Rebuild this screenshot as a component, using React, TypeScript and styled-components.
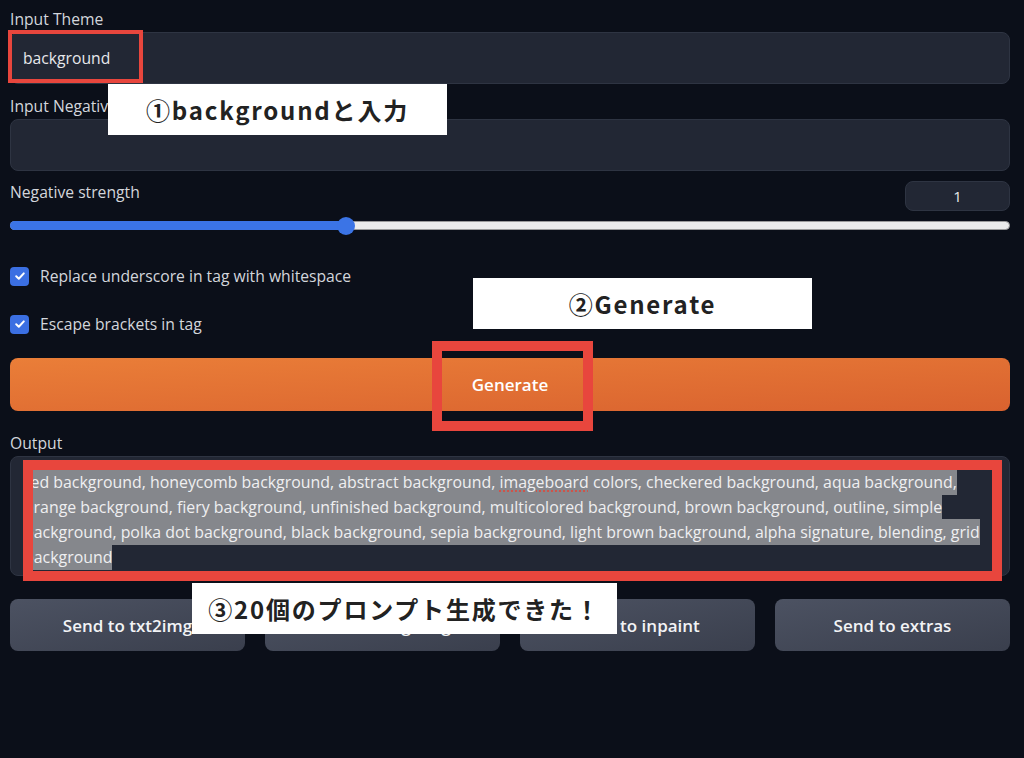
import styled, { createGlobalStyle } from 'styled-components';

const GlobalStyle = createGlobalStyle`
  body {
    margin: 0;
    background: #0b0f19;
    font-family: "Open Sans", "Noto Sans", sans-serif;
  }
`;

const outputLines = [
  'red background, honeycomb background, abstract background, imageboard colors, checkered background, aqua background,',
  'orange background, fiery background, unfinished background, multicolored background, brown background, outline, simple',
  'background, polka dot background, black background, sepia background, light brown background, alpha signature, blending, grid',
  'background',
];

const sendButtons = ['Send to txt2img', 'Send to img2img', 'Send to inpaint', 'Send to extras'];

const CheckIcon = () => (
  <svg width="12" height="12" viewBox="0 0 12 12" fill="none">
    <path d="M2.2 6.3 L4.8 8.8 L9.8 3.4" stroke="#fff" strokeWidth="2" strokeLinecap="round" strokeLinejoin="round" />
  </svg>
);

const renderLine = (line: string) => {
  const idx = line.indexOf('imageboard');
  if (idx < 0) return line;
  return (
    <>
      {line.slice(0, idx)}
      <Misspelled>imageboard</Misspelled>
      {line.slice(idx + 10)}
    </>
  );
};

const App = () => {
  return (
    <>
      <GlobalStyle />
      <Page>
        <Label>Input Theme</Label>
        <TextBox>background</TextBox>

        <Label $top={11}>Input Negative Theme</Label>
        <TextBox />

        <StrengthRow>
          <Label>Negative strength</Label>
          <NumberBox>1</NumberBox>
        </StrengthRow>
        <Slider>
          <SliderFill style={{ width: '33.6%' }} />
          <SliderThumb style={{ left: '33.6%' }} />
        </Slider>

        <CheckRow $top={36}>
          <Checkbox>
            <CheckIcon />
          </Checkbox>
          Replace underscore in tag with whitespace
        </CheckRow>
        <CheckRow $top={28}>
          <Checkbox>
            <CheckIcon />
          </Checkbox>
          Escape brackets in tag
        </CheckRow>

        <GenerateButton>Generate</GenerateButton>

        <Label $top={21}>Output</Label>
        <OutputBox>
          {outputLines.map((line) => (
            <OutputLine key={line}>
              <Selected>{renderLine(line)}</Selected>
            </OutputLine>
          ))}
        </OutputBox>

        <ButtonRow>
          {sendButtons.map((label) => (
            <SendButton key={label}>{label}</SendButton>
          ))}
        </ButtonRow>

        <RedFrame $top={30} $left={8} $width={135} $height={53} $thickness={4} />
        <RedFrame $top={341} $left={432} $width={161} $height={90} $thickness={10} />
        <RedFrame $top={460} $left={23} $width={979} $height={121} $thickness={10} />

        <Note $top={84} $left={108} $width={339}>①backgroundと入力</Note>
        <Note $top={278} $left={473} $width={339}>②Generate</Note>
        <Note $top={583} $left={192} $width={425}>③20個のプロンプト生成できた！</Note>
      </Page>
    </>
  );
};

export default App;

const Page = styled.div`
  position: relative;
  box-sizing: border-box;
  height: 758px;
  padding: 8px 14px 0 10px;
  display: flex;
  flex-direction: column;
  overflow: hidden;
`;

const Label = styled.div<{ $top?: number }>`
  margin-top: ${(p) => p.$top ?? 0}px;
  height: 22px;
  line-height: 22px;
  font-size: 15.7px;
  color: #d3d6dc;
  margin-bottom: 2px;
`;

const TextBox = styled.div`
  box-sizing: border-box;
  height: 52px;
  padding: 0 12px;
  display: flex;
  align-items: center;
  background: #222734;
  border: 1px solid #2e3442;
  border-radius: 8px;
  color: #e7e8eb;
  font-size: 15.7px;
`;

const StrengthRow = styled.div`
  margin-top: 10px;
  display: flex;
  justify-content: space-between;
  align-items: flex-start;
  height: 30px;
`;

const NumberBox = styled.div`
  box-sizing: border-box;
  width: 105px;
  height: 30px;
  display: flex;
  align-items: center;
  justify-content: center;
  background: #222734;
  border: 1px solid #2e3442;
  border-radius: 8px;
  color: #e7e8eb;
  font-size: 15px;
`;

const Slider = styled.div`
  position: relative;
  box-sizing: border-box;
  margin-top: 10px;
  height: 9px;
  background: #ebebeb;
  border: 1px solid #9a9a9a;
  border-radius: 5px;
`;

const SliderFill = styled.div`
  position: absolute;
  left: -1px;
  top: -1px;
  bottom: -1px;
  background: #3b74e6;
  border-radius: 5px 0 0 5px;
`;

const SliderThumb = styled.div`
  position: absolute;
  top: 50%;
  width: 18px;
  height: 18px;
  margin-left: -9px;
  margin-top: -9px;
  border-radius: 50%;
  background: #3b74e6;
`;

const CheckRow = styled.div<{ $top: number }>`
  margin-top: ${(p) => p.$top}px;
  display: flex;
  align-items: center;
  gap: 11px;
  height: 20px;
  font-size: 15.7px;
  color: #d3d6dc;
`;

const Checkbox = styled.span`
  width: 19px;
  height: 19px;
  border-radius: 4px;
  background: #3b6fe2;
  display: flex;
  align-items: center;
  justify-content: center;
`;

const GenerateButton = styled.div`
  margin-top: 24px;
  height: 53px;
  display: flex;
  align-items: center;
  justify-content: center;
  border-radius: 8px;
  background: linear-gradient(to bottom right, #ea7e38, #d9622f);
  color: #fff;
  font-weight: 600;
  font-size: 17px;
`;

const OutputBox = styled.div`
  box-sizing: border-box;
  height: 120px;
  padding: 13px 0 0 13px;
  background: #222734;
  border: 1px solid #2e3442;
  border-radius: 8px;
  font-size: 15.9px;
  color: #efeff1;
  overflow: hidden;
  white-space: nowrap;
`;

const OutputLine = styled.div`
  height: 25px;
  line-height: 25px;
`;

const Selected = styled.span`
  background: #85878c;
  padding: 2px 0 2px;
`;

const Misspelled = styled.span`
  text-decoration: underline dotted #e0463a;
  text-underline-offset: 3px;
`;

const ButtonRow = styled.div`
  margin-top: 23px;
  display: grid;
  grid-template-columns: repeat(4, 1fr);
  gap: 20px;
`;

const SendButton = styled.div`
  height: 52px;
  display: flex;
  align-items: center;
  justify-content: center;
  border-radius: 8px;
  background: linear-gradient(to bottom right, #4c5262, #3a3f4d);
  color: #f2f3f5;
  font-weight: 600;
  font-size: 17px;
`;

const RedFrame = styled.div<{ $top: number; $left: number; $width: number; $height: number; $thickness: number }>`
  position: absolute;
  box-sizing: border-box;
  top: ${(p) => p.$top}px;
  left: ${(p) => p.$left}px;
  width: ${(p) => p.$width}px;
  height: ${(p) => p.$height}px;
  border: ${(p) => p.$thickness}px solid #e8463d;
`;

const Note = styled.div<{ $top: number; $left: number; $width: number }>`
  position: absolute;
  box-sizing: border-box;
  top: ${(p) => p.$top}px;
  left: ${(p) => p.$left}px;
  width: ${(p) => p.$width}px;
  height: 51px;
  background: #fff;
  display: flex;
  align-items: center;
  justify-content: center;
  font-family: "Noto Sans CJK JP", "Noto Sans", sans-serif;
  font-weight: 700;
  font-size: 24px;
  color: #222;
  letter-spacing: 1.8px;
`;
